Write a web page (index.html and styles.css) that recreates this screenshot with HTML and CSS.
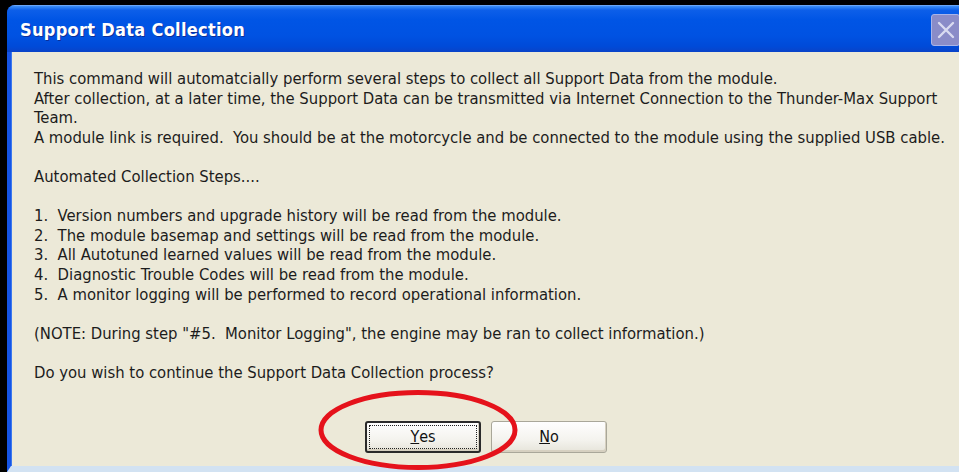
FILE: index.html
```html
<!DOCTYPE html>
<html>
<head>
<meta charset="utf-8">
<title>Support Data Collection</title>
<link rel="stylesheet" href="styles.css">
</head>
<body>
<div class="screen">
  <div class="window">
    <div class="titlebar">
      <span class="title">Support Data Collection</span>
      <span class="close" aria-label="Close">
        <svg width="20" height="20" viewBox="0 0 20 20"><path d="M3 3 L17 17 M17 3 L3 17" stroke="#d9dbf0" stroke-width="2.4" stroke-linecap="round"/></svg>
      </span>
    </div>
    <div class="content">
      <div class="message">
        <p>This command will automatcially perform several steps to collect all Support Data from the module.<br>After collection, at a later time, the Support Data can be transmitted via Internet Connection to the Thunder-Max Support Team.<br>A module link is required.&nbsp; You should be at the motorcycle and be connected to the module using the supplied USB cable.</p>
        <p>Automated Collection Steps....</p>
        <p>1.&nbsp; Version numbers and upgrade history will be read from the module.<br>2.&nbsp; The module basemap and settings will be read from the module.<br>3.&nbsp; All Autotuned learned values will be read from the module.<br>4.&nbsp; Diagnostic Trouble Codes will be read from the module.<br>5.&nbsp; A monitor logging will be performed to record operational information.</p>
        <p>(NOTE: During step "#5.&nbsp; Monitor Logging", the engine may be ran to collect information.)</p>
        <p>Do you wish to continue the Support Data Collection process?</p>
      </div>
      <div class="buttons">
        <button class="btn default"><span class="focus"><u>Y</u>es</span></button>
        <button class="btn"><span class="plain"><u>N</u>o</span></button>
        <svg class="mark" width="204" height="84" viewBox="0 0 204 84"><ellipse cx="102" cy="42" rx="97" ry="37.5" fill="none" stroke="#e5121b" stroke-width="5"/></svg>
      </div>
    </div>
  </div>
</div>
</body>
</html>
```

FILE: styles.css
```css
html, body {
  margin: 0;
  padding: 0;
  background: #000;
}

.screen {
  width: 959px;
  height: 472px;
  overflow: hidden;
  padding: 5px 0 0 7px;
  box-sizing: border-box;
  background: #000;
}

.window {
  width: 956px;
  height: 467px;
  display: flex;
  flex-direction: column;
  background: #0a3fd0;
  border-radius: 8px 0 0 0;
  overflow: hidden;
}

.titlebar {
  height: 47px;
  flex: none;
  display: flex;
  align-items: center;
  justify-content: space-between;
  padding: 0 3px 0 13px;
  background: linear-gradient(#3d8ff6 0%, #0d5fe9 9%, #0055e5 30%, #0052e2 65%, #004ad8 88%, #0a43c8 100%);
  border-top: 1px solid #6aa6f8;
  box-sizing: border-box;
}

.title {
  font-family: "DejaVu Sans Condensed", "DejaVu Sans", sans-serif;
  font-stretch: condensed;
  font-weight: bold;
  font-size: 18px;
  color: #ffffff;
  text-shadow: 1px 1px 0 #0b2f9a;
  letter-spacing: 0.3px;
}

.close {
  width: 29px;
  height: 32px;
  display: flex;
  align-items: center;
  justify-content: center;
  background: #8a8cc8;
  border: 1px solid #a9b4e8;
  border-radius: 3px;
  box-sizing: border-box;
  margin-top: 1px;
}

.content {
  flex: 1;
  display: flex;
  flex-direction: column;
  background: #ece9d8;
  border-left: 4px solid #1655e6;
  border-bottom: 6px solid #d2e2f2;
  box-shadow: inset 1px 0 0 #3b78ee;
  padding: 17px 0 0 23px;
  position: relative;
}

.message {
  width: 912px;
  font-family: "DejaVu Sans Condensed", "DejaVu Sans", sans-serif;
  font-stretch: condensed;
  font-size: 16.5px;
  line-height: 19.6px;
  color: #1c1c1c;
}

.message p {
  margin: 0 0 19.6px 0;
}

.message p:last-child {
  margin-bottom: 0;
}

.buttons {
  display: flex;
  gap: 10px;
  padding-left: 331px;
  margin-top: 38px;
  position: relative;
}

.btn {
  width: 116px;
  height: 32px;
  padding: 3px;
  font-family: "DejaVu Sans Condensed", "DejaVu Sans", sans-serif;
  font-stretch: condensed;
  font-size: 16px;
  color: #111;
  background: linear-gradient(#fefefe 0%, #f4f3ee 60%, #e6e4da 100%);
  border: 1px solid #a9a799;
  border-radius: 3px;
  box-shadow: inset -1px -2px 0 #d6d0c0;
  box-sizing: border-box;
  display: flex;
}

.btn.default {
  border: 2px solid #2a2a2a;
  padding: 2px;
}

.btn .focus,
.btn .plain {
  flex: 1;
  display: flex;
  align-items: center;
  justify-content: center;
}

.btn .focus {
  border: 1px dotted #222;
}

.mark {
  position: absolute;
  left: 282px;
  top: -33px;
}
```
